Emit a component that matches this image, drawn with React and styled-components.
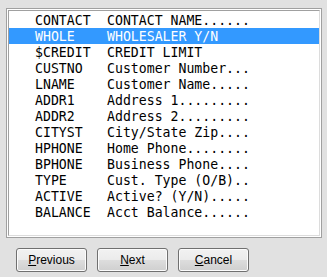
import React from "react";
import styled, { createGlobalStyle } from "styled-components";

const Global = createGlobalStyle`
  html, body { margin: 0; padding: 0; background: #e1e1e1; }
  body { width: 327px; height: 277px; overflow: hidden; }
`;

const Page = styled.div`
  display: flex;
  flex-direction: column;
  padding: 8px 0 0 6px;
`;

const Frame = styled.div`
  width: 316px;
  height: 230px;
  box-sizing: border-box;
  border: 1px solid #a0a0a0;
  display: flex;
`;

const FrameInner = styled.div`
  flex: 1;
  display: flex;
  border: 1px solid #ffffff;
`;

const ListBox = styled.div`
  flex: 1;
  background: #ffffff;
  border-style: solid;
  border-width: 1px;
  border-color: #a0a0a0 #dcdcdc #dcdcdc #a0a0a0;
  padding-top: 1px;
  display: flex;
  flex-direction: column;
`;

const Row = styled.div`
  height: 16px;
  display: flex;
  align-items: center;
  padding-left: 26px;
  font-family: "DejaVu Sans Mono", "Liberation Mono", monospace;
  font-size: 13.2px;
  white-space: pre;
  background: ${(p) => (p.$selected ? "#3399ff" : "transparent")};
  color: ${(p) => (p.$selected ? "#ffffff" : "#000000")};
`;

const Code = styled.span`
  width: 72px;
  flex: none;
`;

const Desc = styled.span``;

const ButtonBar = styled.div`
  display: flex;
  gap: 10px;
  padding: 10px 0 0 10px;
`;

const Button = styled.button`
  width: 71px;
  height: 24px;
  box-sizing: border-box;
  border: 1px solid #707070;
  border-radius: 3px;
  box-shadow: inset 0 0 0 1px #fcfcfc;
  background: linear-gradient(
    to bottom,
    #f2f2f2 0%,
    #ebebeb 50%,
    #dddddd 51%,
    #cfcfcf 100%
  );
  font-family: "Liberation Sans", Arial, sans-serif;
  font-size: 12px;
  color: #000000;
  padding: 0;
  display: flex;
  align-items: center;
  justify-content: center;
`;

const Key = styled.span`
  text-decoration: underline;
`;

const rows = [
  ["CONTACT", "CONTACT NAME......"],
  ["WHOLE", "WHOLESALER Y/N"],
  ["$CREDIT", "CREDIT LIMIT"],
  ["CUSTNO", "Customer Number..."],
  ["LNAME", "Customer Name....."],
  ["ADDR1", "Address 1........."],
  ["ADDR2", "Address 2........."],
  ["CITYST", "City/State Zip...."],
  ["HPHONE", "Home Phone........"],
  ["BPHONE", "Business Phone...."],
  ["TYPE", "Cust. Type (O/B).."],
  ["ACTIVE", "Active? (Y/N)....."],
  ["BALANCE", "Acct Balance......"],
];

export default function App() {
  return (
    <>
      <Global />
      <Page>
        <Frame>
          <FrameInner>
            <ListBox>
              {rows.map(([code, desc], i) => (
                <Row key={code} $selected={i === 1}>
                  <Code>{code}</Code>
                  <Desc>{desc}</Desc>
                </Row>
              ))}
            </ListBox>
          </FrameInner>
        </Frame>
        <ButtonBar>
          <Button>
            <Key>P</Key>revious
          </Button>
          <Button>
            <Key>N</Key>ext
          </Button>
          <Button>
            <Key>C</Key>ancel
          </Button>
        </ButtonBar>
      </Page>
    </>
  );
}
